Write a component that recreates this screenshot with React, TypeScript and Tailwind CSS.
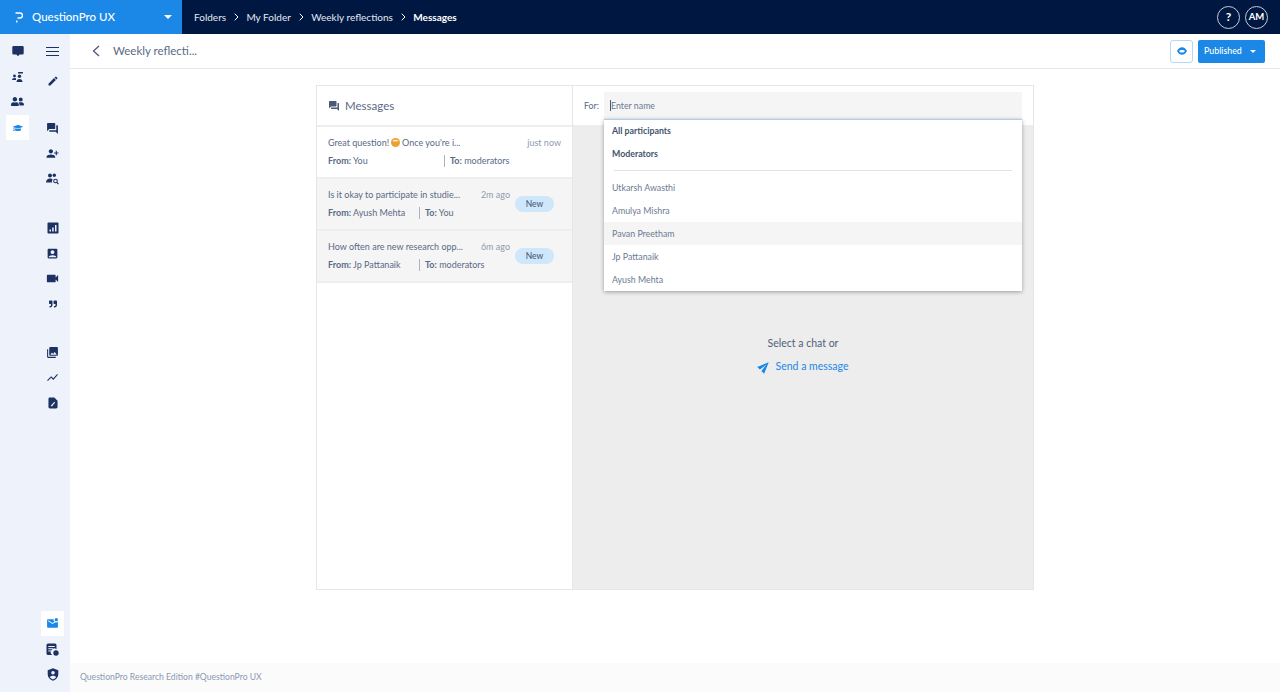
import type { ReactNode } from 'react'
import { FaGraduationCap, FaQuoteRight, FaUserFriends } from 'react-icons/fa'
import {
  MdAccountBox,
  MdEdit,
  MdMarkEmailUnread,
  MdPersonAdd,
  MdPhotoLibrary,
  MdQuestionAnswer,
  MdSend,
  MdShowChart,
  MdVideocam,
} from 'react-icons/md'

const navy = 'text-[#1d3263]'

function Bubble() {
  return (
    <svg width="12" height="12" viewBox="0 0 12 12" fill="currentColor">
      <path d="M1.5 1h9A1.2 1.2 0 0 1 11.7 2.2v6A1.2 1.2 0 0 1 10.500 9.400H7.600L6 11.200 4.400 9.400H1.500A1.200 1.200 0 0 1 .3 8.200v-6A1.200 1.200 0 0 1 1.500 1z" />
    </svg>
  )
}

function PeopleList() {
  return (
    <svg width="12" height="12" viewBox="0 0 12 12" fill="currentColor">
      <circle cx="2.500" cy="5" r="1.400" />
      <path d="M0 9c0-1.300 1.200-2 2.500-2 .6 0 1.100.1 1.500.4V9z" />
      <circle cx="7.500" cy="5.200" r="1.700" />
      <path d="M4.500 11c0-1.800 1.400-3 3-3s3 1.200 3 3z" />
      <rect x="6" y="1" width="5" height="1.500" rx=".5" />
    </svg>
  )
}

function PeopleSearch() {
  return (
    <svg width="13" height="13" viewBox="0 0 13 13" fill="currentColor">
      <circle cx="4" cy="3.500" r="2" />
      <circle cx="8.300" cy="3.200" r="1.700" />
      <path d="M0 10.500C0 8 2 6.500 4 6.500c1 0 2 .3 2.600 1A3.500 3.500 0 0 0 6 10.500z" />
      <circle cx="9.500" cy="9" r="1.800" fill="none" stroke="currentColor" strokeWidth="1.100" />
      <path d="M10.800 10.400 12.500 12.200" stroke="currentColor" strokeWidth="1.200" />
    </svg>
  )
}

function BarsBox() {
  return (
    <svg width="12" height="12" viewBox="0 0 12 12" fill="currentColor">
      <path
        fillRule="evenodd"
        d="M1.200 .5h9.600a.7.700 0 0 1 .7.700v9.600a.7.700 0 0 1-.7.700H1.200a.7.700 0 0 1-.7-.7V1.200a.7.700 0 0 1 .7-.7zM2.500 7.500v2h1.500v-2zM5.200 5.500v4h1.500v-4zM8 3v6.500h1.500V3z"
      />
    </svg>
  )
}

function FileChart() {
  return (
    <svg width="10" height="12" viewBox="0 0 11 13" fill="currentColor">
      <path d="M2 .5h5L10.500 4v7A1.500 1.500 0 0 1 9 12.500H2A1.500 1.500 0 0 1 .5 11V2A1.500 1.500 0 0 1 2 .5z" />
      <path d="M3 9.500l4-4.500 .8 1-3.500 4.300z" fill="#eef3fb" />
    </svg>
  )
}

function ListBadge() {
  return (
    <svg width="13" height="13" viewBox="0 0 13 13" fill="currentColor">
      <path d="M2 .5h7A1.500 1.500 0 0 1 10.500 2v4.200A3.500 3.500 0 0 0 6.300 12H2A1.500 1.500 0 0 1 .5 10.500V2A1.500 1.500 0 0 1 2 .5z" />
      <rect x="2.300" y="3" width="6.400" height="1" fill="#eef3fb" />
      <rect x="2.300" y="5.200" width="4.500" height="1" fill="#eef3fb" />
      <rect x="2.300" y="7.400" width="2.800" height="1" fill="#eef3fb" />
      <circle cx="10" cy="10" r="2.700" />
    </svg>
  )
}

function ShieldUser() {
  return (
    <svg width="12" height="13" viewBox="0 0 12 13" fill="currentColor">
      <path
        fillRule="evenodd"
        d="M6 .3l5.300 2v4c0 3-2.200 5.400-5.300 6.400C2.900 11.700.7 9.300.7 6.300v-4zM6 3a1.800 1.800 0 1 0 0 3.600A1.800 1.800 0 0 0 6 3zM2.800 9.300C3.600 10.300 4.700 11 6 11.400c1.300-.4 2.400-1.100 3.200-2.100C8.600 8.300 7.400 7.800 6 7.800s-2.600.5-3.200 1.500z"
      />
    </svg>
  )
}

function NavIcon({ children, active, className }: { children: ReactNode; active?: boolean; className?: string }) {
  return (
    <div className={`flex justify-center ${className ?? ''}`}>
      <div
        className={`flex h-[25px] w-[23px] items-center justify-center ${active ? 'bg-white text-[#1b87e6]' : navy}`}
      >
        {children}
      </div>
    </div>
  )
}

function Sidebar() {
  return (
    <aside className="flex w-[70px] shrink-0 bg-[#eef3fb]">
      <div className="w-[35px] pt-[4px]">
        <NavIcon><Bubble /></NavIcon>
        <NavIcon className="mt-px"><PeopleList /></NavIcon>
        <NavIcon><FaUserFriends size={13} /></NavIcon>
        <NavIcon className="mt-px" active><FaGraduationCap size={10} /></NavIcon>
      </div>
      <div className="flex w-[35px] flex-col pt-[5px]">
        <NavIcon>
          <div className="flex flex-col gap-[3px]">
            <span className="h-px w-[13px] bg-[#1d3263]" />
            <span className="h-px w-[13px] bg-[#1d3263]" />
            <span className="h-px w-[13px] bg-[#1d3263]" />
          </div>
        </NavIcon>
        <NavIcon className="mt-[4px]"><MdEdit size={12} /></NavIcon>
        <NavIcon className="mt-[23px]"><MdQuestionAnswer size={13} /></NavIcon>
        <NavIcon><MdPersonAdd size={13} className="-scale-x-100" /></NavIcon>
        <NavIcon><PeopleSearch /></NavIcon>
        <NavIcon className="mt-[24px]"><BarsBox /></NavIcon>
        <NavIcon className="mt-px"><MdAccountBox size={13} /></NavIcon>
        <NavIcon><MdVideocam size={15} /></NavIcon>
        <NavIcon><FaQuoteRight size={8} /></NavIcon>
        <NavIcon className="mt-[24px]"><MdPhotoLibrary size={13} /></NavIcon>
        <NavIcon><MdShowChart size={13} /></NavIcon>
        <NavIcon><FileChart /></NavIcon>
        <NavIcon className="mt-auto" active><MdMarkEmailUnread size={13} /></NavIcon>
        <NavIcon className="mt-px"><ListBadge /></NavIcon>
        <NavIcon className="mb-[5px]"><ShieldUser /></NavIcon>
      </div>
    </aside>
  )
}

function TopBar() {
  const crumbs = ['Folders', 'My Folder', 'Weekly reflections']
  return (
    <header className="flex h-[34px] shrink-0 bg-[#001841] text-white">
      <div className="flex w-[182px] items-center bg-[#1b87e6] pl-[15px] pr-[10px]">
        <svg width="8" height="11" viewBox="0 0 8 11" fill="none" stroke="white" strokeWidth="1.400">
          <path d="M.5 1h4.500a2.500 2.500 0 0 1 0 5H2.500" />
          <path d="M1.800 8.500v2" />
        </svg>
        <span className="ml-[9px] text-[11.500px] font-medium">QuestionPro UX</span>
        <span className="ml-auto h-0 w-0 border-x-[4px] border-t-[4px] border-x-transparent border-t-white" />
      </div>
      <nav className="flex items-center pl-[12px] text-[10px]">
        {crumbs.map((c) => (
          <div key={c} className="flex items-center">
            <span className="text-[#e3e9f3]">{c}</span>
            <svg className="mx-[7.700px]" width="5" height="8" viewBox="0 0 5 8" fill="none" stroke="white" strokeWidth="1">
              <path d="M.7.7 4 4 .7 7.300" />
            </svg>
          </div>
        ))}
        <span className="font-bold">Messages</span>
      </nav>
      <div className="ml-auto flex items-center gap-[5px] pr-[12px]">
        <div className="flex h-[23px] w-[23px] items-center justify-center rounded-full border border-[#c6ccd8] text-[12px] font-bold">?</div>
        <div className="flex h-[23px] w-[23px] items-center justify-center rounded-full border border-[#c6ccd8] text-[9.500px] font-bold">AM</div>
      </div>
    </header>
  )
}

function SubHeader() {
  return (
    <div className="flex h-[35px] shrink-0 items-center border-b border-[#e6e8ec] pl-[22px] pr-[15px]">
      <svg width="8" height="12" viewBox="0 0 8 12" fill="none" stroke="#4a5b78" strokeWidth="1.300">
        <path d="M7 1 1.500 6 7 11" />
      </svg>
      <span className="ml-[13px] text-[11.500px] text-[#5a6a85]">Weekly reflecti...</span>
      <div className="ml-auto flex items-center gap-[5px]">
        <div className="flex h-[23px] w-[23px] items-center justify-center rounded-[3px] border border-[#b9d6f2]">
          <svg width="10" height="8" viewBox="0 0 12 9" fill="#1b87e6">
            <path fillRule="evenodd" d="M6 0c2.500 0 4.700 1.700 6 4.500C10.700 7.300 8.500 9 6 9S1.300 7.300 0 4.500C1.300 1.700 3.500 0 6 0zM2.500 4.400c.7 1.300 2 2 3.500 2s2.800-.7 3.500-2c-.7-.6-2-1-3.500-1s-2.800.4-3.500 1z" />
          </svg>
        </div>
        <button className="flex h-[23px] w-[67px] items-center rounded-[2px] bg-[#1b87e6] pl-[6px] text-[8.800px] font-medium text-white">
          Published
          <span className="ml-auto mr-[9px] h-0 w-0 border-x-[3px] border-t-[3px] border-x-transparent border-t-white" />
        </button>
      </div>
    </div>
  )
}

function Hug() {
  return (
    <svg className="mx-[2px] inline-block align-[-1px]" width="9" height="9" viewBox="0 0 9 9">
      <circle cx="4.500" cy="4.500" r="4.500" fill="#eda02f" />
      <path d="M1.500 3c1-1.600 5-1.600 6 0-1 .8-5 .8-6 0z" fill="#f4ead7" />
    </svg>
  )
}

type Msg = { text: ReactNode; time: string; from: string; to: string; isNew?: boolean; fromW: string }

const messages: Msg[] = [
  { text: <>Great question!<Hug />Once you're i...</>, time: 'just now', from: 'You', to: 'moderators', fromW: 'w-[116px]' },
  { text: 'Is it okay to participate in studie...', time: '2m ago', from: 'Ayush Mehta', to: 'You', isNew: true, fromW: 'w-[91px]' },
  { text: 'How often are new research opp...', time: '6m ago', from: 'Jp Pattanaik', to: 'moderators', isNew: true, fromW: 'w-[91px]' },
]

function MessageRow({ m }: { m: Msg }) {
  return (
    <div className={`flex h-[52px] items-center border-b-2 border-[#eeeeee] pl-[11px] ${m.isNew ? 'bg-[#f5f5f5]' : 'bg-white'}`}>
      <div className={m.isNew ? 'w-[182px]' : 'w-[233px]'}>
        <div className="flex justify-between whitespace-nowrap text-[9px] leading-[12px] text-[#5a6a85]">
          <span>{m.text}</span>
          <span className="text-[#8f9cb0]">{m.time}</span>
        </div>
        <div className="mt-[6px] flex whitespace-nowrap text-[9px] leading-[12px] text-[#5a6a85]">
          <span className={m.fromW}><b className="font-bold">From:</b> {m.from}</span>
          <span className="border-l border-[#aab4c4] pl-[5px]"><b className="font-bold">To:</b> {m.to}</span>
        </div>
      </div>
      {m.isNew && (
        <span className="ml-[5px] flex h-[16px] w-[39px] items-center justify-center rounded-full bg-[#cfe7fa] text-[8.500px] font-medium text-[#4a5b78]">
          New
        </span>
      )}
    </div>
  )
}

function RecipientMenu() {
  const people = ['Utkarsh Awasthi', 'Amulya Mishra', 'Pavan Preetham', 'Jp Pattanaik', 'Ayush Mehta']
  return (
    <div className="absolute left-[31px] top-[33px] w-[418px] border-t border-[#a9d0f3] bg-white shadow-[0_1px_4px_rgba(0,0,0,0.35)]">
      <div className="px-[8px] text-[8.800px] font-bold text-[#44546f]">
        <div className="flex h-[21px] items-center">All participants</div>
        <div className="flex h-[25px] items-center">Moderators</div>
      </div>
      <div className="mx-[10px] mt-[4px] mb-[5px] border-t border-[#e3e3e3]" />
      {people.map((p) => (
        <div
          key={p}
          className={`flex h-[23px] items-center px-[8px] text-[8.800px] text-[#6b7a92] ${p === 'Pavan Preetham' ? 'bg-[#f5f5f5]' : ''}`}
        >
          {p}
        </div>
      ))}
    </div>
  )
}

function MessagesCard() {
  return (
    <div className="mx-auto flex h-[505px] w-[718px] border border-[#e6e6e6]">
      <div className="flex w-[256px] shrink-0 flex-col border-r border-[#e6e6e6]">
        <div className="flex h-[41px] shrink-0 items-center gap-[5px] border-b-2 border-[#eeeeee] pl-[11px] text-[#5a6a85]">
          <MdQuestionAnswer size={12} className="text-[#4a5b78]" />
          <span className="text-[11.500px]">Messages</span>
        </div>
        {messages.map((m) => (
          <MessageRow key={m.from} m={m} />
        ))}
      </div>
      <div className="relative flex min-w-0 flex-1 flex-col">
        <div className="flex h-[39px] shrink-0 items-center bg-white pl-[11px]">
          <span className="w-[20px] text-[8.800px] text-[#5a6a85]">For:</span>
          <div className="flex h-[27px] w-[418px] items-center bg-[#f5f5f5] pl-[6px] text-[8.800px] text-[#6b7a92]">
            <span className="h-[11px] w-px bg-[#4a5b78]" />
            Enter name
          </div>
        </div>
        <div className="flex flex-1 flex-col items-center justify-center gap-[9px] bg-[#ededed] pb-[5px]">
          <p className="text-[10.500px] leading-[14px] text-[#4f5f7a]">Select a chat or</p>
          <p className="flex items-center gap-[5px] text-[10.500px] leading-[14px] text-[#1b87e6]">
            <MdSend size={13} className="-rotate-45" />
            Send a message
          </p>
        </div>
        <RecipientMenu />
      </div>
    </div>
  )
}

export default function App() {
  return (
    <div className="flex h-[692px] w-[1280px] flex-col overflow-hidden bg-white font-['Lato',sans-serif]">
      <TopBar />
      <div className="flex min-h-0 flex-1">
        <Sidebar />
        <main className="flex min-w-0 flex-1 flex-col">
          <SubHeader />
          <div className="flex-1 pt-[16px]">
            <MessagesCard />
          </div>
          <footer className="flex h-[29px] shrink-0 items-center bg-[#fbfbfb] pl-[10px] text-[8.600px] text-[#8a9ab2]">
            QuestionPro Research Edition #QuestionPro UX
          </footer>
        </main>
      </div>
    </div>
  )
}
